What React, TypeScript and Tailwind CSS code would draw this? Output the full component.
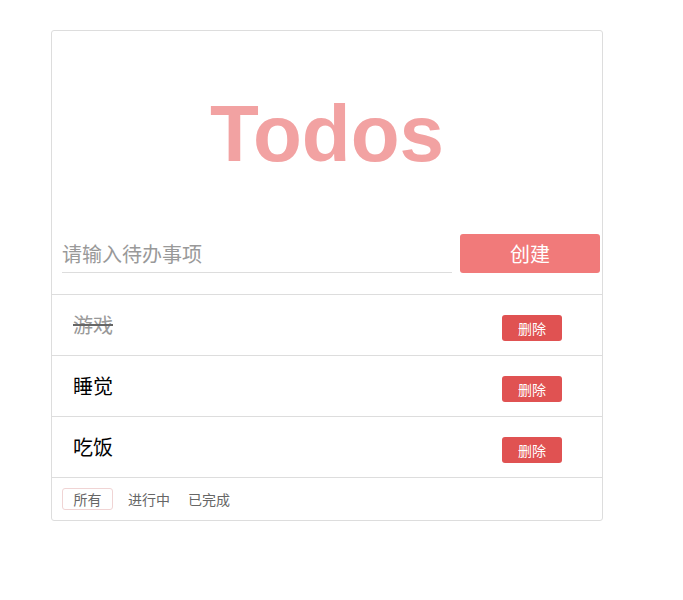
const todos = [
  { id: 1, title: '游戏', done: true },
  { id: 2, title: '睡觉', done: false },
  { id: 3, title: '吃饭', done: false },
];

const cjk = 'font-["Noto_Sans_CJK_SC","Microsoft_YaHei",sans-serif]';

export default function App() {
  return (
    <div className="min-h-[600px] bg-white pt-[30px] pl-[51px]">
      <div className="w-[552px] rounded-[3px] border border-[#dddddd] bg-white">
        {/* Header */}
        <h1 className='pt-[63px] pb-[60px] text-center font-["Liberation_Sans",Arial,sans-serif] text-[80px] font-bold leading-[80px] text-[#f2a2a2]'>
          Todos
        </h1>

        {/* New todo */}
        <div className="flex items-start pl-[10px] pr-[2px] pb-[21px]">
          <input
            className={`h-[39px] flex-1 border-b border-[#dddddd] text-[20px] text-[#333] outline-none placeholder:text-[#999999] ${cjk}`}
            placeholder="请输入待办事项"
          />
          <button
            className={`ml-[8px] h-[39px] w-[140px] rounded-[3px] bg-[#f17a7a] text-[20px] text-white ${cjk}`}
          >
            创建
          </button>
        </div>

        {/* List */}
        <ul>
          {todos.map((t) => (
            <li
              key={t.id}
              className="flex h-[61px] items-center justify-between border-t border-[#dddddd] pl-[21px] pr-[40px]"
            >
              <span
                className={`text-[20px] ${cjk} ${
                  t.done ? 'text-[#999999] line-through decoration-[#666]' : 'text-black'
                }`}
              >
                {t.title}
              </span>
              <button
                className={`mt-[6px] h-[26px] w-[60px] rounded-[3px] bg-[#e05252] text-[14px] leading-[26px] text-white ${cjk}`}
              >
                删除
              </button>
            </li>
          ))}
        </ul>

        {/* Filters */}
        <div className={`flex h-[43px] items-start border-t border-[#dddddd] pt-[10px] pl-[10px] text-[14px] text-[#666666] ${cjk}`}>
          <span className="flex h-[22px] w-[51px] items-center justify-center rounded-[3px] border border-[#f0d4d4]">
            所有
          </span>
          <span className="ml-[15px] flex h-[22px] items-center">进行中</span>
          <span className="ml-[18px] flex h-[22px] items-center">已完成</span>
        </div>
      </div>
    </div>
  );
}
